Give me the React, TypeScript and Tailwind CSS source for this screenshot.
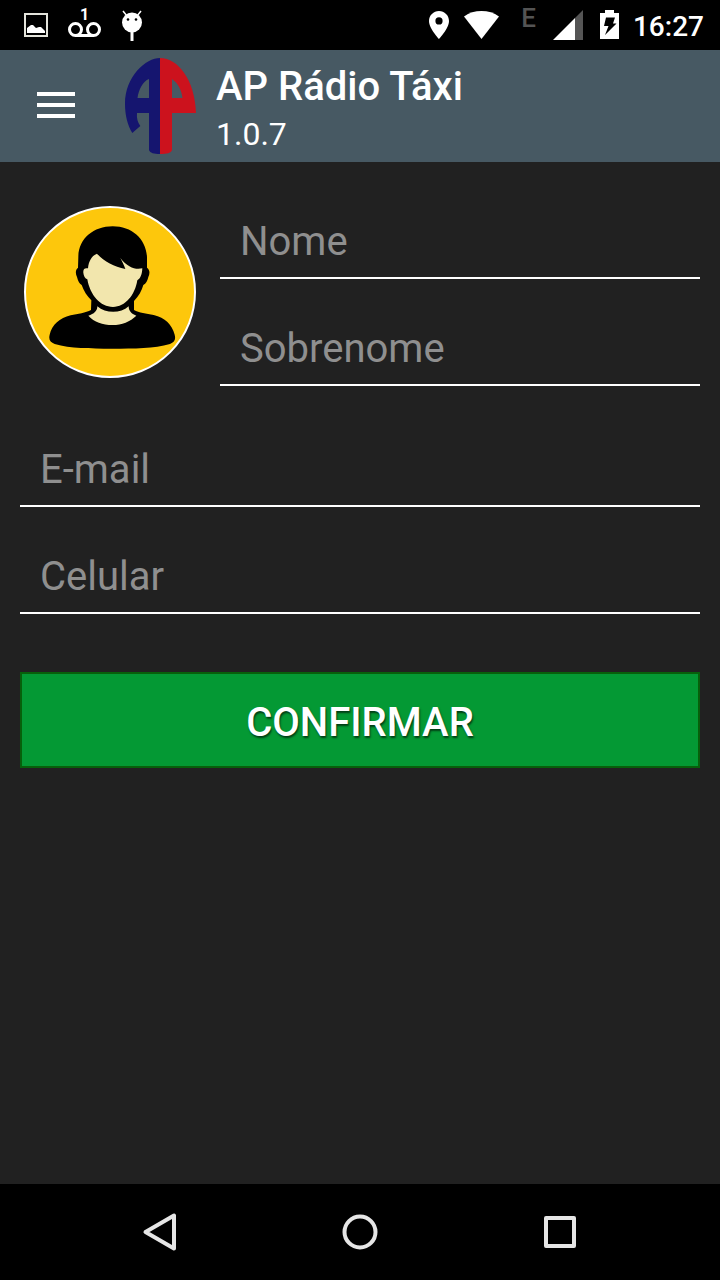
import { useId, useState } from 'react';
import type { FormEvent } from 'react';

type FieldProps = {
  label: string;
  type: string;
  value: string;
  onChange: (value: string) => void;
};

function Field({ label, type, value, onChange }: FieldProps) {
  const id = useId();

  return (
    <label htmlFor={id} className="block w-full">
      <input
        id={id}
        type={type}
        value={value}
        placeholder={label}
        aria-label={label}
        onChange={(e) => onChange(e.target.value)}
        className="block h-[67px] w-full border-b-2 border-white bg-transparent px-5 pb-1.5 text-[40px] leading-[48px] text-white outline-none placeholder:text-[#8f8f8f]"
      />
    </label>
  );
}

function StatusBar() {
  return (
    <div className="flex h-[50px] items-center justify-between bg-black pr-4 pl-6 text-white">
      <div className="flex items-center gap-5">
        <svg width="24" height="50" viewBox="0 0 24 50" aria-hidden="true">
          <rect x="1" y="14" width="22" height="22" fill="none" stroke="#e4e4dc" strokeWidth="2" />
          <path d="M3 33v-5l4-3h2l3 3 3-1h2l4 4v2z" fill="white" />
        </svg>
        <svg width="33" height="50" viewBox="0 0 33 50" fill="none" stroke="white" strokeWidth="3" aria-hidden="true">
          <circle cx="7.5" cy="29.5" r="6" />
          <circle cx="25.5" cy="29.5" r="6" />
          <path d="M7 35.5h19" />
          <text x="12" y="20" fill="white" stroke="none" fontSize="16" fontWeight="700">
            1
          </text>
        </svg>
        <svg width="22" height="50" viewBox="0 0 22 50" aria-hidden="true">
          <path d="M2 11l4 5M20 11l-4 5" stroke="white" strokeWidth="1.5" />
          <circle cx="11" cy="22.5" r="10" fill="white" />
          <circle cx="7" cy="19.5" r="1.3" fill="black" />
          <circle cx="15" cy="19.5" r="1.3" fill="black" />
          <path d="M11 32v9" stroke="white" strokeWidth="3" />
        </svg>
      </div>

      <div className="flex items-center">
        <svg className="mr-[15px]" width="20" height="50" viewBox="0 0 20 50" aria-hidden="true">
          <path
            d="M10 11C4.500 11 0 15.400 0 21c0 7.500 10 18 10 18s10-10.500 10-18c0-5.600-4.500-10-10-10zm0 13.500a3.600 3.600 0 1 1 0-7.200 3.600 3.600 0 0 1 0 7.200z"
            fill="white"
          />
        </svg>
        <svg className="mr-[22px]" width="35" height="50" viewBox="0 0 35 50" aria-hidden="true">
          <path d="M17.500 39L0 16.500C5 12.800 11 11 17.500 11S30 12.800 35 16.500z" fill="white" />
        </svg>
        <span className="mr-[17px] pb-3.5 text-[26px] leading-8 font-medium text-[#545454]">E</span>
        <svg className="mr-[17px]" width="30" height="50" viewBox="0 0 30 50" aria-hidden="true">
          <path d="M22 18v22h8V10z" fill="#555555" />
          <path d="M0 40L22 18v22z" fill="white" />
        </svg>
        <svg className="mr-[14px]" width="19" height="50" viewBox="0 0 19 50" aria-hidden="true">
          <path d="M5 10h9v3h5v26H0V13h5z" fill="white" />
          <path d="M6 17.500h9l-2 6h3.500L5 35l3.500-9H4z" fill="black" />
        </svg>
        <span className="pt-1 text-[28px] leading-8 font-medium">16:27</span>
      </div>
    </div>
  );
}

function Logo() {
  return (
    <svg width="72" height="96" viewBox="0 0 72 96" className="shrink-0" role="img" aria-label="AP">
      <path
        fillRule="evenodd"
        fill="#15156f"
        d="M35 0C21 0 0 18 0 46c0 11 2.500 21 7.300 29l8-7C12.500 64 11.500 60 12 55h12v37c1 3 5 4 11 4zM24 21v19H12.500C13.500 32 18 23 24 21z"
      />
      <path
        fillRule="evenodd"
        fill="#cc121d"
        d="M35 0c18 0 35 22 36 55H47v37c-1 3-5 4-12 4zM47 21v19h10.500C56.500 32 53 25 47 21z"
      />
    </svg>
  );
}

function Avatar() {
  return (
    <svg width="172" height="172" viewBox="42 33 516 516" aria-hidden="true">
      <circle cx="300" cy="291" r="255" fill="#fdc70c" stroke="white" strokeWidth="6" />
      {/* hair, head outline and shoulders */}
      <path d="M308 94C250 94 205 132 205 186L204 218C196 224 196 236 201 246C204 259 208 265 215 270C221 288 232 304 244 316L243 345C227 354 204 356 182 361C149 369 126 389 119 419C115 435 121 442 134 447C182 461 238 461 306 461S432 461 480 447C493 442 498 435 494 419C486 389 465 368 431 360C409 356 387 354 372 345L372 318C386 304 395 288 400 270C408 265 412 259 415 246C420 236 420 224 411 218L411 186C408 132 366 94 308 94z" />
      {/* face */}
      <path
        d="M261 176c-14 5-25 21-27 44-9-2-15 1-14 13 1 10 5 17 12 20 8 47 39 83 77 83 37 0 66-36 73-80 8-5 14-14 15-36-20 5-44-2-66-31 7 13 11 22 15 33-34-7-64-22-85-46z"
        fill="#f2e6ad"
      />
      {/* neck */}
      <path d="M262 334c25 22 70 22 94 0 0 13 7 22 23 28-18 18-44 28-71 28-31 0-55-9-73-28 17-5 27-14 27-28z" fill="#f2e6ad" />
    </svg>
  );
}

function NavBar() {
  return (
    <nav className="flex h-24 items-center justify-center gap-[152px] bg-black">
      <button type="button" aria-label="Voltar">
        <svg width="48" height="48" viewBox="0 0 48 48" fill="none" stroke="#e6e6e6" strokeWidth="4" strokeLinejoin="round">
          <path d="M9.500 24L38 7.500v33z" />
        </svg>
      </button>
      <button type="button" aria-label="Início">
        <svg width="48" height="48" viewBox="0 0 48 48" fill="none" stroke="#e6e6e6" strokeWidth="4">
          <circle cx="24" cy="24" r="15.500" />
        </svg>
      </button>
      <button type="button" aria-label="Recentes">
        <svg width="48" height="48" viewBox="0 0 48 48" fill="none" stroke="#e6e6e6" strokeWidth="4" strokeLinejoin="round">
          <rect x="10" y="10" width="28" height="28" />
        </svg>
      </button>
    </nav>
  );
}

export default function App() {
  const [firstName, setFirstName] = useState('');
  const [lastName, setLastName] = useState('');
  const [email, setEmail] = useState('');
  const [phone, setPhone] = useState('');

  const handleSubmit = (e: FormEvent) => {
    e.preventDefault();
  };

  return (
    <div className="flex min-h-screen flex-col bg-[#212121] font-[Roboto,sans-serif]">
      <StatusBar />

      <header className="flex h-28 items-center bg-[#475963] text-white">
        <button type="button" aria-label="Menu" className="mr-[50px] ml-[37px] flex w-[38px] flex-col gap-[7px] pb-0.5">
          <span className="h-1 w-full bg-white" />
          <span className="h-1 w-full bg-white" />
          <span className="h-1 w-full bg-white" />
        </button>
        <Logo />
        <div className="ml-[19px] pt-1.5">
          <h1 className="text-[40px] leading-[50px] font-medium">AP Rádio Táxi</h1>
          <p className="text-[32px] leading-[44px]">1.0.7</p>
        </div>
      </header>

      <main className="flex-1 px-5 pt-11">
        <form onSubmit={handleSubmit} noValidate>
          <div className="flex items-start gap-6">
            <button type="button" aria-label="Foto do perfil" className="ml-1 shrink-0">
              <Avatar />
            </button>
            <div className="flex flex-1 flex-col gap-10 pt-1.5">
              <Field label="Nome" type="text" value={firstName} onChange={setFirstName} />
              <Field label="Sobrenome" type="text" value={lastName} onChange={setLastName} />
            </div>
          </div>
          <div className="mt-[54px] flex flex-col gap-10">
            <Field label="E-mail" type="email" value={email} onChange={setEmail} />
            <Field label="Celular" type="tel" value={phone} onChange={setPhone} />
          </div>
          <button
            type="submit"
            className="mt-[58px] h-24 w-full border-2 border-[#07600b] bg-[#049934] pt-1.5 text-[40px] font-medium text-white [text-shadow:1px_2px_2px_#00000099]"
          >
            CONFIRMAR
          </button>
        </form>
      </main>

      <NavBar />
    </div>
  );
}
